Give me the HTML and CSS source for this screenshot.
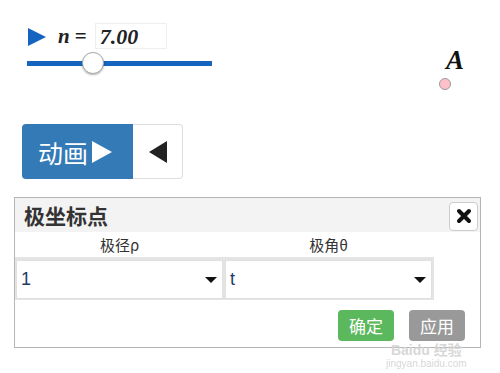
FILE: index.html
```html
<!DOCTYPE html>
<html lang="zh-CN">
<head>
  <meta charset="UTF-8">
  <title>极坐标点</title>
  <link rel="stylesheet" href="styles.css">
</head>
<body>
  <div class="canvas">
    <!-- slider n -->
    <div class="slider">
      <div class="slider-head">
        <svg class="play" width="18" height="18" viewBox="0 0 18 18">
          <polygon points="0,0 18,9 0,18" fill="#1565c0"/>
        </svg>
        <span class="var">n</span>
        <span class="eq">=</span>
        <span class="value-box">7.00</span>
      </div>
      <div class="track">
        <span class="knob"></span>
      </div>
    </div>

    <!-- point A -->
    <div class="point">
      <span class="point-label">A</span>
      <span class="point-dot"></span>
    </div>

    <!-- animation buttons -->
    <div class="anim-group">
      <button type="button" class="anim-play">动画<span class="tri-right"></span></button>
      <button type="button" class="anim-back"><span class="tri-left"></span></button>
    </div>

    <!-- dialog -->
    <div class="dialog">
      <div class="dialog-header">
        <span class="dialog-title">极坐标点</span>
        <button type="button" class="close-btn">
          <svg width="16" height="16" viewBox="0 0 16 16">
            <path d="M3 3 L13 13 M13 3 L3 13" stroke="#111" stroke-width="4" stroke-linecap="round"/>
          </svg>
        </button>
      </div>
      <div class="col-labels">
        <span class="col-label">极径ρ</span>
        <span class="col-label">极角θ</span>
      </div>
      <div class="select-row">
        <div class="select-box">
          <span class="select-value">1</span>
          <span class="caret"></span>
        </div>
        <div class="select-box">
          <span class="select-value">t</span>
          <span class="caret"></span>
        </div>
      </div>
      <div class="dialog-footer">
        <button type="button" class="btn btn-ok">确定</button>
        <button type="button" class="btn btn-apply">应用</button>
      </div>
    </div>

    <div class="watermark">
      <span class="wm-big">Baidu 经验</span>
      <span class="wm-small">jingyan.baidu.com</span>
    </div>
  </div>
</body>
</html>
```

FILE: styles.css
```css
body {
  margin: 0;
  background-color: #fff;
  font-family: "Noto Sans CJK SC", "Noto Sans", sans-serif;
}
.canvas {
  position: relative;
  width: 500px;
  height: 373px;
  overflow: hidden;
}

/* slider */
.slider {
  position: absolute;
  left: 27px;
  top: 23px;
  width: 185px;
}
.slider-head {
  display: flex;
  align-items: center;
  height: 26px;
}
.play {
  margin-left: 1px;
  margin-top: 1px;
}
.var {
  font-family: "Liberation Serif", serif;
  font-style: italic;
  font-weight: bold;
  font-size: 21px;
  margin-left: 12px;
  color: #222;
}
.eq {
  font-family: "Liberation Serif", serif;
  font-weight: bold;
  font-size: 21px;
  margin-left: 5px;
  color: #222;
}
.value-box {
  margin-left: 8px;
  width: 66px;
  height: 24px;
  border: 1px solid #eee;
  padding-left: 4px;
  font-family: "Liberation Serif", serif;
  font-style: italic;
  font-weight: bold;
  font-size: 22px;
  line-height: 25px;
  color: #222;
}
.track {
  position: relative;
  height: 5px;
  margin-top: 12px;
  background-color: #1565c0;
}
.knob {
  position: absolute;
  left: 55px;
  top: -9px;
  width: 20px;
  height: 20px;
  border-radius: 50%;
  background-color: #fff;
  border: 1px solid #aaa;
  box-shadow: 0 1px 2px rgba(0, 0, 0, 0.3);
}

/* point A */
.point {
  position: absolute;
  left: 439px;
  top: 50px;
  width: 40px;
  height: 45px;
}
.point-label {
  position: absolute;
  left: 7px;
  top: -5px;
  font-family: "Liberation Serif", serif;
  font-style: italic;
  font-weight: bold;
  font-size: 27px;
  color: #111;
}
.point-dot {
  position: absolute;
  left: 0;
  top: 28px;
  width: 10px;
  height: 10px;
  border-radius: 50%;
  background-color: #ffc0cb;
  border: 1px solid #999;
}

/* animation buttons */
.anim-group {
  position: absolute;
  left: 22px;
  top: 124px;
  display: flex;
  height: 55px;
}
.anim-play {
  display: flex;
  align-items: center;
  width: 111px;
  height: 55px;
  padding: 0 0 0 16px;
  border: none;
  border-radius: 4px 0 0 4px;
  background-color: #337ab7;
  color: #fff;
  font-family: "Noto Sans CJK SC", sans-serif;
  font-size: 25px;
}
.tri-right {
  width: 0;
  height: 0;
  margin-left: 4px;
  border-top: 11px solid transparent;
  border-bottom: 11px solid transparent;
  border-left: 20px solid #fff;
}
.anim-back {
  display: flex;
  align-items: center;
  justify-content: center;
  width: 50px;
  height: 55px;
  padding: 0;
  background-color: #fff;
  border: 1px solid #ddd;
  border-left: none;
  border-radius: 0 4px 4px 0;
}
.tri-left {
  width: 0;
  height: 0;
  border-top: 11px solid transparent;
  border-bottom: 11px solid transparent;
  border-right: 18px solid #222;
}

/* dialog */
.dialog {
  position: absolute;
  left: 14px;
  top: 197px;
  width: 465px;
  height: 149px;
  border: 1px solid #b5b5b5;
  background-color: #fff;
}
.dialog-header {
  display: flex;
  align-items: center;
  justify-content: space-between;
  height: 34px;
  padding: 0 2px 0 9px;
  background-color: #f3f3f3;
}
.dialog-title {
  font-size: 21px;
  font-weight: bold;
  color: #333;
}
.close-btn {
  display: flex;
  align-items: center;
  justify-content: center;
  width: 29px;
  height: 29px;
  padding: 0;
  margin-top: 2px;
  background-color: #fff;
  border: 1px solid #ccc;
  border-radius: 4px;
}
.col-labels {
  display: grid;
  grid-template-columns: 209px 209px;
  height: 25px;
  align-items: center;
}
.col-label {
  text-align: center;
  font-size: 15px;
  color: #333;
}
.select-row {
  display: inline-flex;
  gap: 2px;
  padding: 3px 2px 1px 1px;
  background-color: #e4e4e4;
}
.select-box {
  display: flex;
  align-items: center;
  justify-content: space-between;
  box-sizing: border-box;
  width: 207px;
  height: 39px;
  padding: 0 4px;
  background-color: #fff;
  border: 1px solid #e0e0e0;
}
.select-value {
  font-family: "Liberation Sans", sans-serif;
  font-size: 18px;
  color: #1f3a68;
}
.caret {
  width: 0;
  height: 0;
  margin-right: 1px;
  border-left: 6px solid transparent;
  border-right: 6px solid transparent;
  border-top: 6px solid #111;
}
.dialog-footer {
  display: flex;
  justify-content: flex-end;
  gap: 15px;
  padding: 10px 15px 0 0;
}
.btn {
  width: 56px;
  height: 31px;
  padding: 0;
  border: none;
  border-radius: 4px;
  color: #fff;
  font-family: "Noto Sans CJK SC", sans-serif;
  font-size: 17px;
}
.btn-ok {
  background-color: #5cb85c;
}
.btn-apply {
  background-color: #999;
}

/* watermark, kept below the buttons */
.watermark {
  position: absolute;
  left: 386px;
  top: 343px;
  display: flex;
  flex-direction: column;
  align-items: center;
  color: rgba(210, 210, 210, 0.9);
  pointer-events: none;
}
.wm-big {
  font-family: "Liberation Sans", "Noto Sans CJK SC", sans-serif;
  font-size: 14px;
  font-weight: bold;
  line-height: 15px;
}
.wm-small {
  font-family: "Liberation Sans", sans-serif;
  font-size: 10px;
  line-height: 12px;
}
```
